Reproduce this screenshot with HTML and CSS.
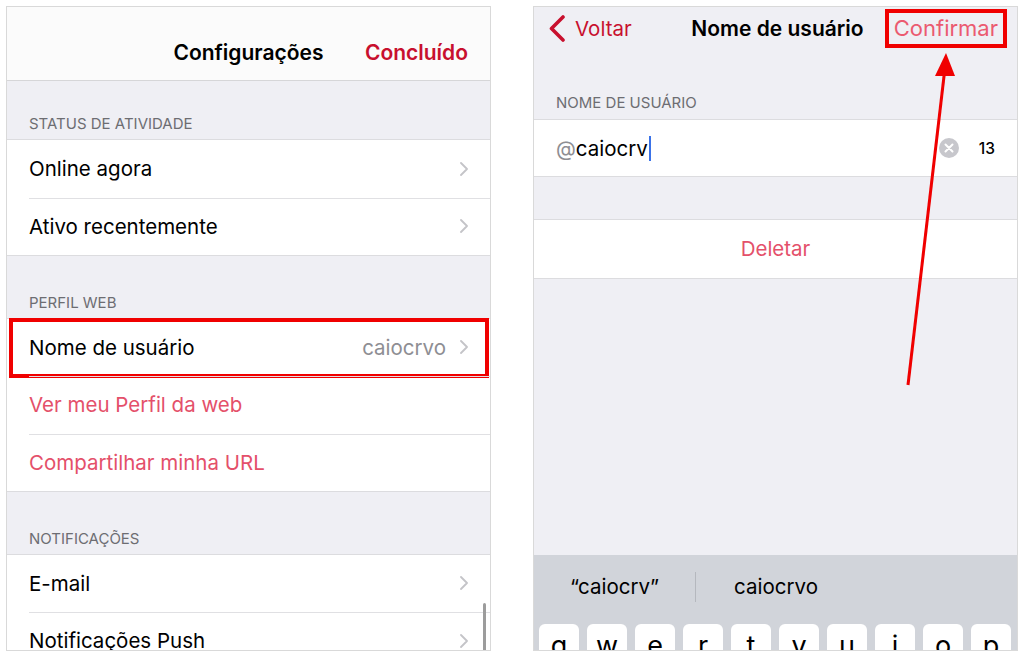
FILE: index.html
```html
<!DOCTYPE html>
<html lang="pt-BR">

<head>
    <meta charset="UTF-8">
    <meta name="viewport" content="width=device-width, initial-scale=1.0">
    <link rel="stylesheet" href="styles.css">
    <title>Nome de usuário</title>
</head>

<body>
    <div class="screens">
        <!-- Settings screen -->
        <div class="phone">
            <div class="nav nav-light">
                <span></span>
                <span class="nav-title">Configurações</span>
                <span class="nav-done">Concluído</span>
            </div>

            <div class="section-label first">STATUS DE ATIVIDADE</div>
            <div class="group">
                <div class="row">
                    <span class="row-text">Online agora</span>
                    <svg class="chevron" width="8" height="14" viewBox="0 0 8 14"><path d="M1 1 L7 7 L1 13" /></svg>
                </div>
                <div class="row">
                    <span class="row-text">Ativo recentemente</span>
                    <svg class="chevron" width="8" height="14" viewBox="0 0 8 14"><path d="M1 1 L7 7 L1 13" /></svg>
                </div>
            </div>

            <div class="section-label">PERFIL WEB</div>
            <div class="group">
                <div class="row highlight">
                    <span class="row-text">Nome de usuário</span>
                    <span class="row-value">caiocrvo</span>
                    <svg class="chevron" width="8" height="14" viewBox="0 0 8 14"><path d="M1 1 L7 7 L1 13" /></svg>
                </div>
                <div class="row">
                    <span class="row-text link">Ver meu Perfil da web</span>
                </div>
                <div class="row">
                    <span class="row-text link">Compartilhar minha URL</span>
                </div>
            </div>

            <div class="section-label">NOTIFICAÇÕES</div>
            <div class="group">
                <div class="row">
                    <span class="row-text">E-mail</span>
                    <svg class="chevron" width="8" height="14" viewBox="0 0 8 14"><path d="M1 1 L7 7 L1 13" /></svg>
                </div>
                <div class="row">
                    <span class="row-text">Notificações Push</span>
                    <svg class="chevron" width="8" height="14" viewBox="0 0 8 14"><path d="M1 1 L7 7 L1 13" /></svg>
                </div>
            </div>

            <div class="scrollbar"></div>
        </div>

        <!-- Username screen -->
        <div class="phone phone-edit">
            <div class="nav nav-edit">
                <span class="nav-back">
                    <svg width="18" height="27" viewBox="0 0 18 27"><path d="M15 2 L3.5 13.5 L15 25" /></svg>
                    Voltar
                </span>
                <span class="nav-title">Nome de usuário</span>
                <span class="nav-confirm">Confirmar</span>
            </div>

            <div class="section-label tall">NOME DE USUÁRIO</div>
            <div class="group">
                <div class="row input-row">
                    <span class="at">@</span><span class="typed">caiocrv</span><span class="caret"></span>
                    <span class="spacer"></span>
                    <span class="clear">
                        <svg width="20" height="20" viewBox="0 0 20 20"><path d="M6.5 6.5 L13.5 13.5 M13.5 6.5 L6.5 13.5" /></svg>
                    </span>
                    <span class="counter">13</span>
                </div>
            </div>

            <div class="gap"></div>
            <div class="group">
                <div class="row center">
                    <span class="row-text link">Deletar</span>
                </div>
            </div>

            <div class="keyboard">
                <div class="suggestions">
                    <span class="suggestion">“caiocrv”</span>
                    <span class="suggestion">caiocrvo</span>
                    <span class="suggestion"></span>
                </div>
                <div class="keys">
                    <span class="key">q</span>
                    <span class="key">w</span>
                    <span class="key">e</span>
                    <span class="key">r</span>
                    <span class="key">t</span>
                    <span class="key">y</span>
                    <span class="key">u</span>
                    <span class="key">i</span>
                    <span class="key">o</span>
                    <span class="key">p</span>
                </div>
            </div>
        </div>
    </div>

    <!-- annotation arrow -->
    <svg class="arrow" width="1024" height="657" viewBox="0 0 1024 657">
        <line x1="908" y1="385" x2="944.5" y2="72" />
        <polygon points="946,53 935,76 955,76" />
    </svg>
</body>
</html>
```

FILE: styles.css
```css
body {
    margin: 0;
    background-color: #ffffff;
    font-family: "Inter", "Noto Sans", sans-serif;
    color: #000;
    position: relative;
    width: 1024px;
    height: 657px;
    overflow: hidden;
}

.screens {
    display: flex;
    gap: 42px;
    padding: 6px 0 0 6px;
}

.phone {
    position: relative;
    width: 485px;
    height: 645px;
    box-sizing: border-box;
    border: 1px solid #d9d9d9;
    background-color: #efeff4;
    overflow: hidden;
    display: flex;
    flex-direction: column;
}

/* navigation bar */
.nav {
    display: grid;
    grid-template-columns: 1fr auto 1fr;
    align-items: center;
    flex-shrink: 0;
}

.nav-light {
    height: 74px;
    box-sizing: border-box;
    padding: 17px 22px 0 22px;
    background-color: #fbfbfb;
    border-bottom: 1px solid #d6d6d8;
}

.nav-title {
    font-size: 21px;
    font-weight: 600;
}

.nav-done {
    justify-self: end;
    font-size: 21px;
    font-weight: 600;
    color: #c8102e;
}

.nav-edit {
    height: 42px;
    padding: 0 10px 0 14px;
}

.nav-back {
    justify-self: start;
    display: flex;
    align-items: center;
    gap: 9px;
    font-size: 20.5px;
    color: #c8102e;
}

.nav-back svg path {
    fill: none;
    stroke: #c8102e;
    stroke-width: 3.6;
    stroke-linecap: round;
    stroke-linejoin: round;
}

.nav-confirm {
    justify-self: end;
    font-size: 22px;
    line-height: 25px;
    color: #eb5a70;
    border: 4px solid #f00000;
    padding: 3px 5px 3px 5px;
}

/* grouped list */
.section-label {
    height: 61.5px;
    box-sizing: border-box;
    display: flex;
    align-items: flex-end;
    padding: 0 22px 7px 22px;
    font-size: 15px;
    line-height: 16px;
    color: #6d6d72;
    flex-shrink: 0;
}

.section-label.first {
    height: 58px;
}

.section-label.tall {
    height: 70px;
    padding-bottom: 8px;
}

.group {
    background-color: #ffffff;
    border-top: 1px solid #dcdcdf;
    border-bottom: 1px solid #dcdcdf;
    flex-shrink: 0;
}

.row {
    position: relative;
    height: 57.5px;
    display: flex;
    align-items: center;
    padding: 0 22px;
}

.row + .row::before {
    content: "";
    position: absolute;
    top: 0;
    left: 22px;
    right: 0;
    height: 1px;
    background-color: #e0e0e3;
}

.row-text {
    font-size: 20.5px;
    flex: 1;
}

.center .row-text {
    text-align: center;
}

.link {
    color: #e4506a;
}

.row-value {
    font-size: 20.5px;
    color: #8e8e93;
    margin-right: 14px;
}

.chevron path {
    fill: none;
    stroke: #c4c4c8;
    stroke-width: 1.8;
    stroke-linecap: round;
    stroke-linejoin: round;
}

.highlight::after {
    content: "";
    position: absolute;
    top: -1px;
    left: 2px;
    right: 1px;
    bottom: -1.5px;
    border: 4px solid #f00000;
}

.scrollbar {
    position: absolute;
    right: 4px;
    top: 596px;
    width: 3px;
    height: 52px;
    border-radius: 2px;
    background-color: #9c9c9c;
}

/* username input */
.input-row {
    height: 56px;
    font-size: 20.5px;
}

.at {
    color: #8e8e93;
}

.caret {
    width: 2px;
    height: 25px;
    margin-left: 1px;
    background-color: #3a72e8;
}

.spacer {
    flex: 1;
}

.clear {
    width: 20px;
    height: 20px;
    border-radius: 50%;
    background-color: #c7c7cc;
    display: flex;
}

.clear path {
    stroke: #ffffff;
    stroke-width: 2;
    stroke-linecap: round;
}

.counter {
    margin-left: 20px;
    font-size: 15.5px;
    font-weight: 500;
}

.gap {
    height: 42px;
    flex-shrink: 0;
}

/* keyboard */
.keyboard {
    margin-top: auto;
    height: 95px;
    flex-shrink: 0;
    background-color: #d1d4da;
    overflow: hidden;
}

.suggestions {
    display: grid;
    grid-template-columns: repeat(3, 1fr);
    align-items: center;
    height: 64px;
}

.suggestion {
    font-size: 20.5px;
    text-align: center;
    line-height: 30px;
}

.suggestion + .suggestion {
    border-left: 1px solid #b5b8be;
}

.keys {
    display: flex;
    gap: 8px;
    padding: 5px 0 0 5px;
}

.key {
    width: 40px;
    height: 54px;
    flex-shrink: 0;
    background-color: #ffffff;
    border-radius: 6px;
    font-size: 27px;
    line-height: 44px;
    text-align: center;
}

/* annotation */
.arrow {
    position: absolute;
    top: 0;
    left: 0;
    pointer-events: none;
}

.arrow line {
    stroke: #f00000;
    stroke-width: 3;
}

.arrow polygon {
    fill: #f00000;
}
```
